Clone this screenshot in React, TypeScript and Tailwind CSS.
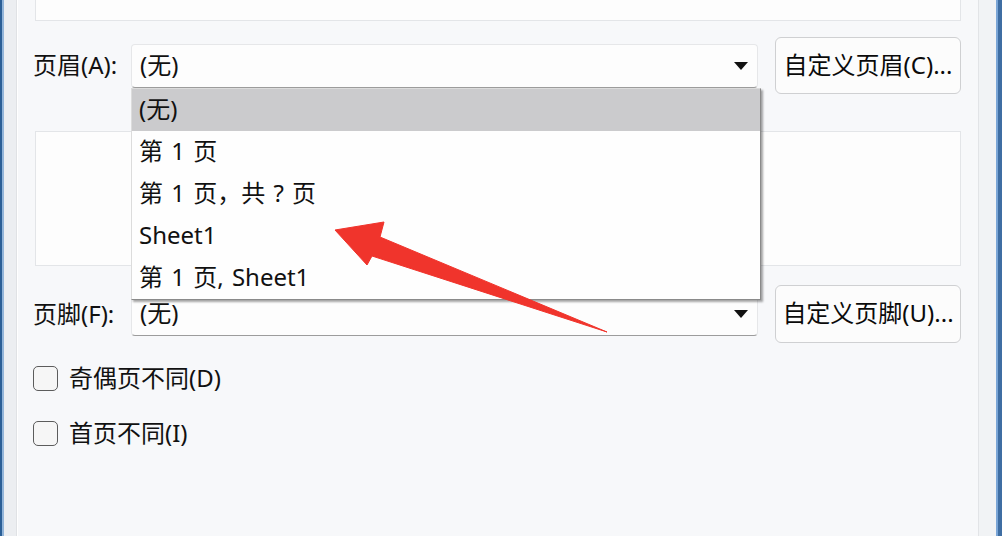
import React from "react";

const FONT = { fontFamily: '"Noto Sans", "Noto Sans CJK SC", sans-serif' };

function Caret() {
  return (
    <svg width="14" height="8" viewBox="0 0 14 8" className="shrink-0">
      <path d="M0 0 L14 0 L7 8 Z" fill="#111" />
    </svg>
  );
}

function Combo({ open }: { open?: boolean }) {
  const items = ["(无)", "第 1 页", "第 1 页，共 ? 页", "Sheet1", "第 1 页, Sheet1"];
  return (
    <div className="relative w-[627px] h-[44px]">
      <div className="w-full h-full flex items-center justify-between pl-[8px] pr-[9px] bg-[#fdfdfd] border border-[#e6e7e9] border-b-[#9c9c9c] rounded-[4px] text-[24px] leading-none text-[#111]">
        <span className="-mt-[2px]">(无)</span>
        <Caret />
      </div>
      {open && (
        <div className="absolute left-0 top-[44px] w-[630px] bg-[#fefefe] border border-[#dcdcdc] border-b-[#8a8a8a] border-r-[#8a8a8a] shadow-[2px_2px_2px_rgba(0,0,0,0.35)] z-10">
          {items.map((t, i) => (
            <div
              key={i}
              className={
                "h-[42px] flex items-center pl-[7px] text-[24px] leading-none text-[#111] [word-spacing:2px] " +
                (i === 0 ? "bg-[#cbcbcd]" : "")
              }
            >
              <span className="-mt-[1px] whitespace-pre">{t}</span>
            </div>
          ))}
        </div>
      )}
    </div>
  );
}

function Row({ label, button, open, h }: { label: string; button: string; open?: boolean; h: string }) {
  return (
    <div className={"flex items-center " + h}>
      <div className="w-[98px] -mt-[1px] text-[24px] leading-none text-[#111]">{label}</div>
      <Combo open={open} />
      <div className="ml-[17px] w-[186px] h-full flex items-center justify-center bg-[#fcfcfc] border border-[#cfd0d2] rounded-[6px] text-[24px] leading-none text-[#0a0a0a]">
        <span className="-mt-[2px]">{button}</span>
      </div>
    </div>
  );
}

function Check({ label }: { label: string }) {
  return (
    <div className="flex items-center">
      <div className="w-[25px] h-[25px] border-[1.5px] border-[#5c5c5c] rounded-[5px] bg-[#f6f6f6]" />
      <div className="ml-[11px] -mt-[1px] text-[24px] leading-none text-[#111]">{label}</div>
    </div>
  );
}

export default function App() {
  return (
    <div className="relative w-[1002px] h-[536px] overflow-hidden flex bg-[#f7f8fa]" style={FONT}>
      {/* left window frame */}
      <div className="flex h-full shrink-0">
        <div className="w-[2px] bg-[#2b5f96]" />
        <div className="w-[2px] bg-[#93b5d9]" />
        <div className="w-[12px] bg-[#eceef1]" />
        <div className="w-[1px] bg-[#e0e2e5]" />
        <div className="w-[1px] bg-[#ffffff]" />
      </div>

      {/* dialog content */}
      <div className="w-[960px] shrink-0 flex flex-col pl-[15px] pr-[17px]">
        <div className="ml-[2px] h-[21px] bg-[#fdfdfd] border-x border-b border-[#e3e5e8]" />

        <div className="mt-[16px]">
          <Row label="页眉(A):" button="自定义页眉(C)..." open h="h-[57px]" />
        </div>

        <div className="ml-[2px] mt-[37px] h-[135px] bg-[#fdfdfd] border border-[#e3e5e8]" />

        <div className="mt-[19px]">
          <Row label="页脚(F):" button="自定义页脚(U)..." h="h-[58px]" />
        </div>

        <div className="mt-[23px]">
          <Check label="奇偶页不同(D)" />
        </div>
        <div className="mt-[30px]">
          <Check label="首页不同(I)" />
        </div>
      </div>

      {/* right window frame */}
      <div className="flex h-full flex-1">
        <div className="w-[1px] bg-[#e2e4e7]" />
        <div className="flex-1 bg-[#f1f3f5]" />
        <div className="w-[2px] bg-[#7aa5d6]" />
        <div className="w-[4px] bg-[#3f6ea3]" />
      </div>

      {/* red annotation arrow */}
      <svg className="absolute left-0 top-0 pointer-events-none z-20" width="1002" height="536" viewBox="0 0 1002 536">
        <polygon
          points="335,230 384,222 380,237 607,332 372,256 367,265"
          fill="#f0342c"
          stroke="#f0342c"
          strokeWidth="1"
          strokeLinejoin="round"
        />
      </svg>
    </div>
  );
}
